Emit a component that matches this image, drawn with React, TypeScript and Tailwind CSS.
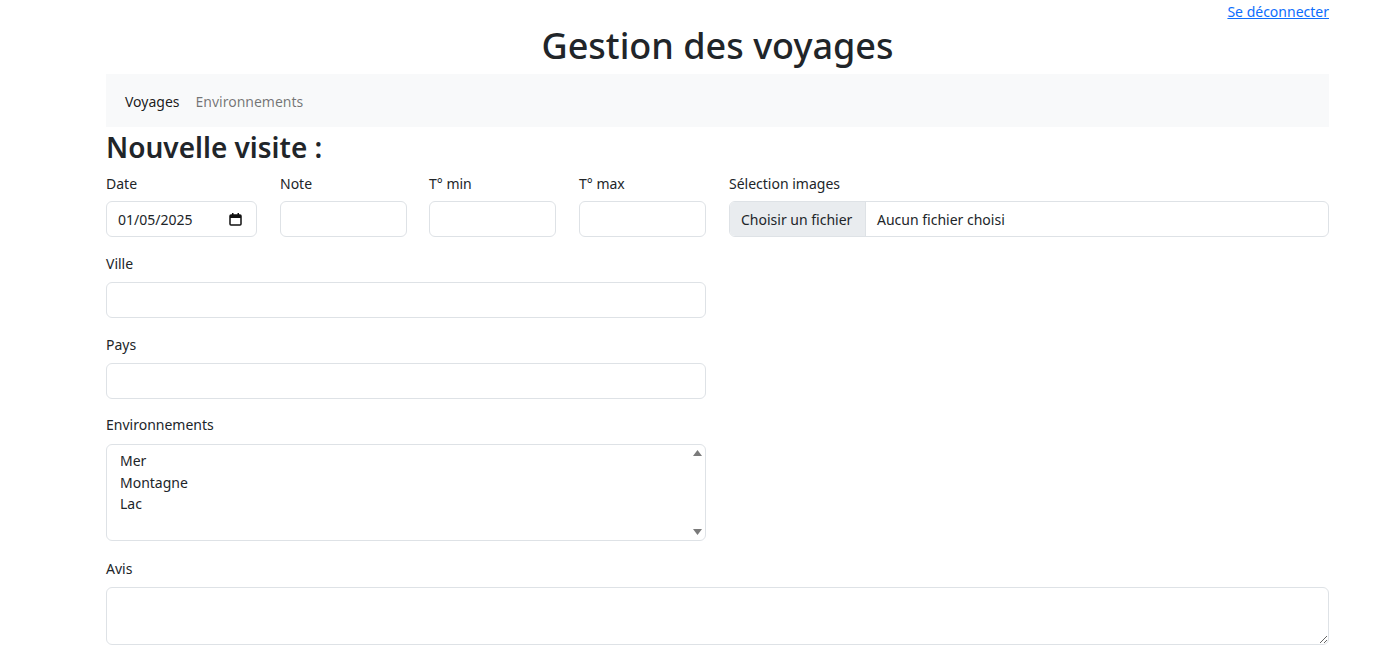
export default function App() {
  return (
    <div className="h-[649px] overflow-hidden bg-white text-[#212529] font-['Noto_Sans',sans-serif] text-[14px] leading-[23px]">
      <div className="ml-[106px] w-[1223px]">
        <div className="flex justify-end h-[23px]">
          <a href="#" className="text-[#0d6efd] underline">Se déconnecter</a>
        </div>
        <h1 className="text-center text-[36px] leading-[45px] font-medium mb-[6px]">Gestion des voyages</h1>

        {/* navbar */}
        <nav className="bg-[#f8f9fa] h-[53px] flex items-center px-[19px] pt-[2px] gap-[16px]">
          <a href="#" className="text-black/90">Voyages</a>
          <a href="#" className="text-black/55">Environnements</a>
        </nav>

        <h2 className="text-[28px] leading-[34px] font-semibold mt-[3px] mb-[8px]">Nouvelle visite :</h2>

        <div className="flex mb-[15px]">
          <div className="w-[151px]">
            <label className="block mb-[6px]">Date</label>
            <div className="h-[36px] border border-[#dee2e6] rounded-[6px] flex items-center justify-between pl-[11px] pr-[14px]">
              <span>01/05/2025</span>
              <svg width="13" height="13" viewBox="0 0 13 13" fill="none">
                <rect x="1" y="2" width="11" height="10" rx="1" stroke="#111" strokeWidth="1.5" />
                <rect x="1" y="2" width="11" height="3" fill="#111" />
                <rect x="3" y="0" width="1.5" height="3" fill="#111" />
                <rect x="8.5" y="0" width="1.5" height="3" fill="#111" />
              </svg>
            </div>
          </div>
          <div className="w-[127px] ml-[23px]">
            <label className="block mb-[6px]">Note</label>
            <input className="w-full h-[36px] border border-[#dee2e6] rounded-[6px] px-3 outline-none" />
          </div>
          <div className="w-[127px] ml-[22px]">
            <label className="block mb-[6px]">T° min</label>
            <input className="w-full h-[36px] border border-[#dee2e6] rounded-[6px] px-3 outline-none" />
          </div>
          <div className="w-[127px] ml-[23px]">
            <label className="block mb-[6px]">T° max</label>
            <input className="w-full h-[36px] border border-[#dee2e6] rounded-[6px] px-3 outline-none" />
          </div>
          <div className="w-[600px] ml-[23px]">
            <label className="block mb-[6px]">Sélection images</label>
            <div className="h-[36px] border border-[#dee2e6] rounded-[6px] flex overflow-hidden">
              <div className="bg-[#e9ecef] border-r border-[#dee2e6] flex items-center px-[11px] w-[136px]">Choisir un fichier</div>
              <div className="flex items-center px-[11px]">Aucun fichier choisi</div>
            </div>
          </div>
        </div>

        <div className="w-[600px] mb-[15px]">
          <label className="block mb-[7px]">Ville</label>
          <input className="w-full h-[36px] border border-[#dee2e6] rounded-[6px] px-3 outline-none" />
        </div>

        <div className="w-[600px] mb-[14px]">
          <label className="block mb-[7px]">Pays</label>
          <input className="w-full h-[36px] border border-[#dee2e6] rounded-[6px] px-3 outline-none" />
        </div>

        <div className="w-[600px] mb-[16px]">
          <label className="block mb-[8px]">Environnements</label>
          <div className="h-[97px] border border-[#dee2e6] rounded-[6px] flex">
            <div className="flex-1 pl-[13px] pt-[5px] leading-[21.5px]">
              <div>Mer</div>
              <div>Montagne</div>
              <div>Lac</div>
            </div>
            <div className="w-[16px] flex flex-col justify-between items-center py-[5px]">
              <svg width="9" height="6" viewBox="0 0 9 6"><path d="M4.5 0L9 6H0z" fill="#7a7a7a" /></svg>
              <svg width="9" height="6" viewBox="0 0 9 6"><path d="M0 0h9L4.5 6z" fill="#7a7a7a" /></svg>
            </div>
          </div>
        </div>

        <div>
          <label className="block mb-[7px]">Avis</label>
          <textarea className="block w-full h-[58px] border border-[#dee2e6] rounded-[6px] px-3 outline-none" />
        </div>
      </div>
    </div>
  );
}
